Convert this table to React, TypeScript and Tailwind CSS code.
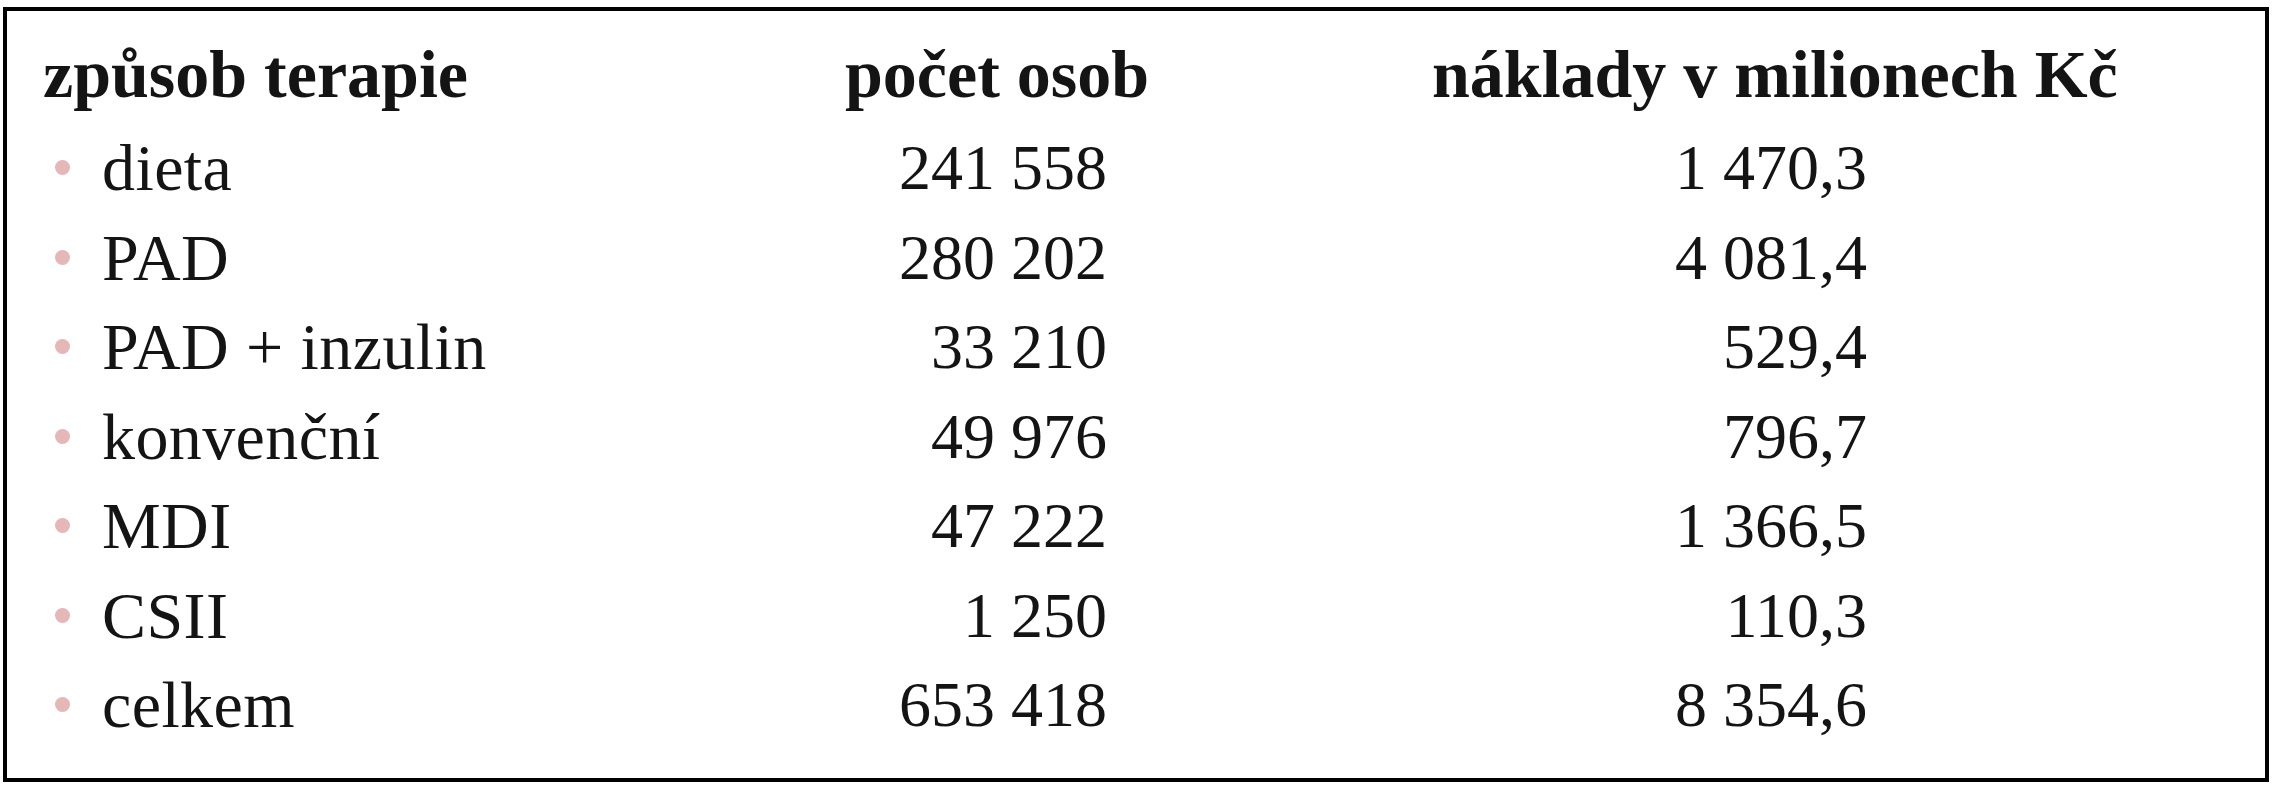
import React from "react";

const rows: [string, string, string][] = [
  ["dieta", "241 558", "1 470,3"],
  ["PAD", "280 202", "4 081,4"],
  ["PAD + inzulin", "33 210", "529,4"],
  ["konvenční", "49 976", "796,7"],
  ["MDI", "47 222", "1 366,5"],
  ["CSII", "1 250", "110,3"],
  ["celkem", "653 418", "8 354,6"],
];

export default function App() {
  return (
    <div className="w-[2280px] h-[800px] bg-white pl-[3px] pt-[7px] font-['Liberation_Serif',serif] text-[#141414]">
      <div className="w-[2266px] h-[775px] border-4 border-black pl-[36px] pt-[15px]">
        <div className="grid grid-cols-[802px_587px_1fr] text-[68px] font-bold leading-[97px] whitespace-nowrap">
          <div>způsob terapie</div>
          <div>počet osob</div>
          <div>náklady v milionech Kč</div>
        </div>
        {rows.map(([name, count, cost]) => (
          <div
            key={name}
            className="grid grid-cols-[802px_587px_1fr] text-[64px] leading-[89.5px] whitespace-nowrap"
          >
            <div className="text-[66px] tracking-[0.4px]">
              <span className="inline-block w-[15px] h-[15px] rounded-full bg-[#e5b7b7] ml-[12px] mr-[32px] align-[15px]" />
              {name}
            </div>
            <div className="w-[262px] text-right">{count}</div>
            <div className="w-[435px] text-right">{cost}</div>
          </div>
        ))}
      </div>
    </div>
  );
}
